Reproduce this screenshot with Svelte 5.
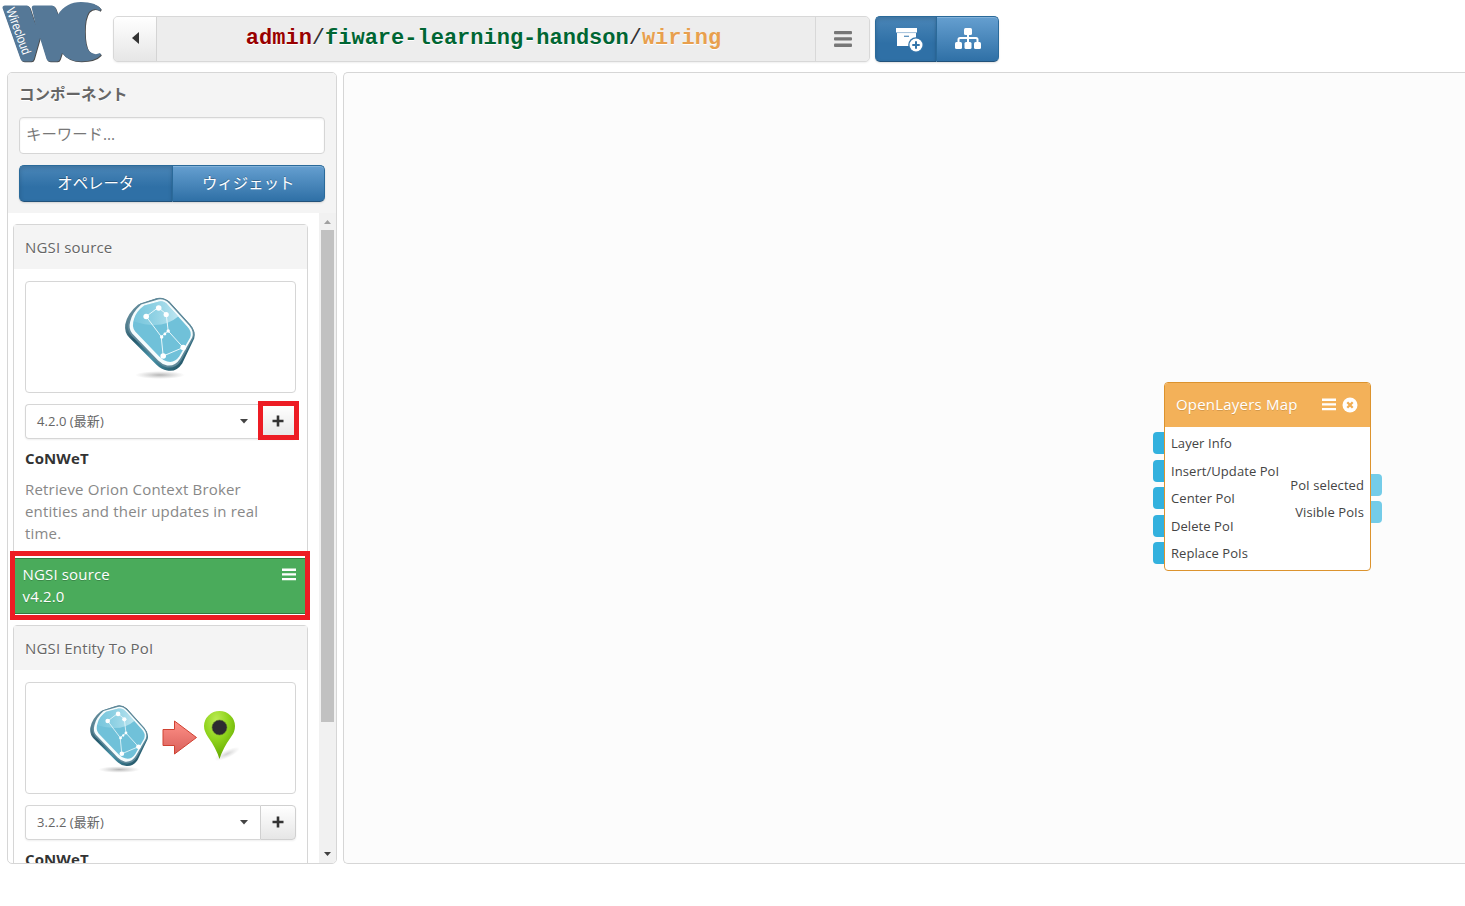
<script>
  const components = [
    {
      title: 'NGSI source', version: '4.2.0', vendor: 'CoNWeT', kind: 'orion',
      description: 'Retrieve Orion Context Broker entities and their updates in real time.',
      instance: { title: 'NGSI source', version: 'v4.2.0' }
    },
    { title: 'NGSI Entity To PoI', version: '3.2.2', vendor: 'CoNWeT', kind: 'convert' }
  ];
  const inputs = ['Layer Info', 'Insert/Update PoI', 'Center PoI', 'Delete PoI', 'Replace PoIs'];
  const outputs = ['PoI selected', 'Visible PoIs'];
  const mark = 'M2.5 8Q2.3 5.5 5 5.5H27Q29 5.5 30 8L35.7 25L32 9Q31 5.5 34 5.5H52Q54.5 5.5 55.5 8L58 14.500Q66 2 81 2Q96 2 101 9L100 11Q94 7 89 12Q85 18 85 31Q85 46 89 51Q94 56 100 53L101 55Q95 61.500 81 61.500Q68 61.500 62 53L60 59Q59 61.500 57 61.500H50Q47.500 61.500 46.500 59L40 38L34 59Q33 61.500 31 61.500H24Q21.500 61.500 20.500 59Z';
</script>

{#snippet bars()}
  <svg class="bars" width="14" height="13" viewBox="0 0 14 13" fill="currentColor">
    <path d="M0 .5h14v2.4H0zM0 5.2h14v2.4H0zM0 9.9h14v2.4H0z" />
  </svg>
{/snippet}

{#snippet tile()}
  <ellipse cx="49" cy="88" rx="25" ry="4" fill="url(#shade)" />
  <g transform="translate(-.8 -1.500)">
    <path d="M28 19L46 13Q53 11 59 16L80 39Q86 46 84 53L72 78Q66 87 57 85Q51 84 46 79L19 52Q14 47 15 39Q17 28 28 19Z" fill="url(#rim)" />
    <path d="M30 18L47 12.5Q53 11 59 16L80 39Q86 46 83 53L71 75Q66 83 57 82Q52 81 48 77L21 50Q16 44 18 37Q20 28 30 18Z" fill="#60899a" />
    <path d="M31 19L48 14Q54 13 59 18L79 40Q84 46 82 52L70 73Q65 81 57 80Q52 79 48 75L22 48Q18 43 20 36Q22 27 31 19Z" fill="#f5fcfd" />
    <path d="M34 20L49 16Q54 15 58 20L77 41Q82 46 80 52L69 71Q64 78 57 76Q53 75 49 71L25 46Q21 41 24 33Q26 26 34 20Z" fill="#70c1d9" />
    <path d="M34 20L49 16Q54 15 58 20L68 31Q52 45 24 36Q25 26 34 20Z" fill="url(#gloss)" />
    <path d="M36 31L48 22L56 28.500L58 45.500L73 62L53 70.500L51 51L36 31M51 51L58 45.500" fill="none" stroke="#e9f8fb" stroke-width="1" />
    <g fill="#fff"><circle cx="36" cy="31" r="2.800" /><circle cx="48.5" cy="22.500" r="2.800" /><circle cx="56" cy="29" r="2.600" /><circle cx="58" cy="45.500" r="1.700" /><circle cx="51.5" cy="51.500" r="1.700" /><circle cx="54.7" cy="48.500" r="1.400" /><circle cx="73" cy="62" r="2.800" /><circle cx="53" cy="70.500" r="2.800" /></g>
  </g>
{/snippet}

<svg class="defs" width="0" height="0">
  <defs>
    <linearGradient id="rim" x1="0" x2="1" y1="0" y2="1"><stop offset="0" stop-color="#8cacb8" /><stop offset=".35" stop-color="#25596c" /><stop offset=".6" stop-color="#4793a9" /><stop offset="1" stop-color="#173d4c" /></linearGradient>
    <linearGradient id="gloss" x1="0" x2="1"><stop offset="0" stop-color="#9bdaea" stop-opacity=".2" /><stop offset="1" stop-color="#d8f3f9" stop-opacity=".75" /></linearGradient>
    <radialGradient id="shade"><stop offset="0" stop-color="#777" stop-opacity=".55" /><stop offset="1" stop-color="#999" stop-opacity="0" /></radialGradient>
    <linearGradient id="arrow" x1="0" x2="0" y1="0" y2="1"><stop offset="0" stop-color="#ff9087" /><stop offset="1" stop-color="#d8605b" /></linearGradient>
    <radialGradient id="pin" cx=".4" cy=".2" r=".8"><stop offset="0" stop-color="#bdec55" /><stop offset=".5" stop-color="#8fd31c" /><stop offset="1" stop-color="#62a800" /></radialGradient>
  </defs>
</svg>

<header>
  <svg class="logo" width="106" height="66" viewBox="0 0 106 66">
    <path class="under" transform="translate(.8 .8)" d={mark} />
    <path d={mark} />
    <text transform="translate(6 9.500) rotate(70)" textLength="49" lengthAdjust="spacingAndGlyphs">Wirecloud</text>
  </svg>
  <div class="crumbs">
    <button class="back" aria-label="Back"><svg width="7" height="12" viewBox="0 0 7 12"><path d="M7 0v12L0 6z" fill="#333" /></svg></button>
    <div class="path"><b class="owner">admin</b>/<b class="space">fiware-learning-handson</b>/<b class="view">wiring</b></div>
    <button class="menu" aria-label="Menu"><svg width="18" height="16" viewBox="0 0 18 16" fill="#777"><rect width="18" height="3.300" rx="1" /><rect y="6.300" width="18" height="3.300" rx="1" /><rect y="12.600" width="18" height="3.300" rx="1" /></svg></button>
  </div>
  <div class="tools">
    <button class="blue on" aria-label="Components">
      <svg class="archive" width="28" height="26" viewBox="0 0 28 26"><path d="M0 1h21v4.500H0zM1 6h19v13H1z" fill="#fff" /><path d="M1 5.700h19" stroke="#b9d0e4" stroke-width=".6" /><path d="M8 9.300h5" stroke="#5b91bd" stroke-width="1.300" /><circle cx="20" cy="18" r="7.800" fill="#3475aa" /><circle cx="20" cy="18" r="6.500" fill="#fff" /><path d="M20 14.300v7.400M16.300 18h7.400" stroke="#3475aa" stroke-width="2" /></svg>
    </button>
    <button class="blue" aria-label="Behaviours">
      <svg width="26" height="22" viewBox="0 0 26 22" fill="#fff"><rect x="9" width="8" height="7" rx="1.500" /><rect y="14" width="7" height="7" rx="1.500" /><rect x="9.500" y="14" width="7" height="7" rx="1.500" /><rect x="19" y="14" width="7" height="7" rx="1.500" /><path d="M13 6v9M3.500 15v-3.500q0-1.500 1.500-1.500h16q1.500 0 1.500 1.500V15" fill="none" stroke="#fff" stroke-width="2" /></svg>
    </button>
  </div>
</header>

<main>
  <aside>
    <section class="filter">
      <h2>コンポーネント</h2>
      <input placeholder="キーワード..." />
      <div class="tabs"><button class="blue on">オペレータ</button><button class="blue">ウィジェット</button></div>
    </section>
    <section class="results">
      <div class="list">
        {#each components as c}
          <article>
            <h3>{c.title}</h3>
            <div class="body">
              <div class="thumb">
                {#if c.kind === 'orion'}
                  <svg width="100" height="100" viewBox="0 0 100 100">{@render tile()}</svg>
                {:else}
                  <svg class="wide" width="170" height="80" viewBox="0 0 170 80">
                    <g transform="translate(-1.500 1.500) scale(.83)">{@render tile()}</g>
                    <path d="M83 34.500h11.500v-8.500L116.500 42.500L94.500 59v-8.500H83z" fill="url(#arrow)" stroke="#cf4232" />
                    <ellipse cx="147" cy="59" rx="14" ry="4" transform="rotate(-25 147 59)" fill="url(#shade)" opacity=".6" />
                    <path d="M139.500 64Q136 53 128 42Q124 36 124 31A15.500 15 0 0 1 155 31Q155 37 151 42Q143 53 139.500 64Z" fill="url(#pin)" />
                    <circle cx="139.500" cy="32.500" r="7.500" fill="#2d2b31" stroke="#66852c" stroke-width=".6" />
                  </svg>
                {/if}
              </div>
              <div class="version">
                <div class="select"><span>{c.version} (最新)</span><svg width="8" height="5" viewBox="0 0 8 5"><path d="M0 0h8L4 4.500z" fill="#444" /></svg></div>
                <button class="add" class:marked={c.instance} aria-label="Add"><svg width="12" height="12" viewBox="0 0 12 12"><path d="M6 .5v11M.5 6h11" stroke="#333" stroke-width="2.600" /></svg></button>
              </div>
              <strong>{c.vendor}</strong>
              {#if c.description}<p>{c.description}</p>{/if}
            </div>
            {#if c.instance}
              <div class="instance"><div>{c.instance.title}<br />{c.instance.version}</div>{@render bars()}</div>
            {/if}
          </article>
        {/each}
      </div>
      <div class="scroll">
        <svg width="7" height="4" viewBox="0 0 7 4"><path d="M0 4L3.500 0L7 4z" fill="#a0a0a0" /></svg>
        <div class="thumbbar"></div>
        <svg width="7" height="4" viewBox="0 0 7 4"><path d="M0 0L3.500 4L7 0z" fill="#404040" /></svg>
      </div>
    </section>
  </aside>

  <div class="canvas">
    <div class="node">
      <div class="title"><span>OpenLayers Map</span>{@render bars()}<svg width="16" height="16" viewBox="0 0 16 16"><circle cx="8" cy="8" r="7.500" fill="#fff" /><path d="M5.300 5.300l5.400 5.400M10.700 5.300l-5.400 5.400" stroke="#f1ae54" stroke-width="2.300" /></svg></div>
      <div class="ports">
        <ul>{#each inputs as name}<li>{name}</li>{/each}</ul>
        <ul class="out">{#each outputs as name}<li>{name}</li>{/each}</ul>
      </div>
    </div>
  </div>
</main>

<style>
  :global(body) { background: #fff; overflow: hidden; }
  :global(#app) { font: 15px/22px "Open Sans", "Noto Sans CJK JP", sans-serif; color: #666; }
  * { box-sizing: border-box; }
  button { font: inherit; padding: 0; margin: 0; display: flex; align-items: center; justify-content: center; }
  .defs { position: absolute; }
  header { display: flex; height: 72px; width: 1465px; }
  .logo { flex: none; fill: #557897; }
  .logo .under { fill: #4a4a4a; }
  .logo text { fill: #fff; font: 13px "Liberation Sans", sans-serif; }
  .crumbs { display: flex; width: 757px; height: 46px; margin: 16px 5px 0 7px; border: 1px solid #d8d8d8; border-radius: 5px; background: #ededed; box-shadow: 0 1px 2px #0001; overflow: hidden; }
  .back { width: 43px; padding-bottom: 2px; border: 0; border-right: 1px solid #d4d4d4; background: linear-gradient(#fff, #e6e6e6); }
  .path { flex: 1; padding: 1px 5px 0 0; text-align: center; font: 22px/42px "Courier New", "Liberation Mono", monospace; color: #333; text-shadow: 0 1px #fff; white-space: pre; }
  .owner { color: #900; }
  .space { color: #063; }
  .view { color: #e8a04e; }
  .menu { width: 54px; padding-bottom: 1px; border: 0; border-left: 1px solid #d8d8d8; background: #eee; }
  .tools { display: flex; width: 124px; height: 46px; margin-top: 16px; }
  .blue { flex: 1; padding-bottom: 1px; color: #fff; border: 1px solid #2a6a9a; border-bottom-color: #22527a; background: linear-gradient(#659fd0, #2f70a6); box-shadow: inset 0 1px #ffffff33, 0 1px 2px #0002; text-shadow: 0 -1px #0004; }
  .blue:first-child { border-radius: 5px 0 0 5px; border-right: 0; }
  .blue:last-child { border-radius: 0 5px 5px 0; }
  .blue.on { background: linear-gradient(#4a86b8, #2f70a6 60%); box-shadow: inset 0 2px 4px #00000026, 0 1px 2px #0002; }
  .tools .blue { flex: none; width: 63px; padding-bottom: 0; }
  .tools .blue.on { width: 61px; padding: 2px 0 0 8px; }
  main { display: flex; gap: 6px; padding-left: 7px; width: 1465px; height: 792px; }
  aside { flex: none; width: 330px; border: 1px solid #d6d6d6; border-radius: 5px; overflow: hidden; display: flex; flex-direction: column; }
  .filter { flex: none; height: 140px; background: #f4f4f4; padding: 10px 11px 0; }
  h2 { margin: 0 0 12px; font-size: 15.500px; line-height: 22px; color: #666; text-shadow: 0 1px #fff; }
  input { display: block; width: 306px; height: 37px; padding: 0 7px 2px 6px; border: 1px solid #d6d6d6; border-radius: 4px; background: #fff; font: inherit; font-size: 15.400px; box-shadow: inset 0 1px 2px #0001; }
  input::placeholder { color: #777; opacity: 1; }
  .tabs { display: flex; width: 306px; height: 37px; margin-top: 11px; font-size: 15.400px; }
  .tabs .blue { padding-bottom: 0; }
  .results { flex: 1; min-height: 0; display: flex; }
  .list { flex: 1; overflow: hidden; padding: 11px 11px 0 5px; }
  article { border: 1px solid #d6d6d6; border-radius: 4px; margin-bottom: 11px; width: 295px; }
  h3 { margin: 0; height: 44px; padding: 0 11px; font-weight: 400; font-size: 15px; letter-spacing: .16px; line-height: 45px; background: #f4f4f4; text-shadow: 0 1px #fff; }
  .body { padding: 12px 11px 0; }
  .thumb { height: 112px; width: 271px; border: 1px solid #d6d6d6; border-radius: 4px; display: flex; align-items: center; justify-content: center; }
  .wide { margin: -7px 0 0 8px; }
  .version { display: flex; width: 271px; height: 35px; margin: 11px 0 8px; border-radius: 4px; box-shadow: 0 1px 2px #0001; }
  .select { flex: 1; border: 1px solid #d6d6d6; border-right: 0; border-radius: 4px 0 0 4px; padding: 0 12px 0 11px; display: flex; align-items: center; justify-content: space-between; font-size: 13px; letter-spacing: .06px; }
  .select span { padding-bottom: 1px; }
  .add { width: 36px; padding-bottom: 1px; border: 1px solid #d0d0d0; border-radius: 0 4px 4px 0; background: linear-gradient(#fff, #e6e6e6); }
  .add.marked { position: relative; border-color: transparent; }
  .marked::after { content: ''; position: absolute; inset: -4px -4px -2px -3px; border: 5px solid #ed1c24; }
  strong { display: block; color: #333; line-height: 22px; letter-spacing: .1px; }
  p { margin: 9px 20px 0 0; height: 66px; color: #888; letter-spacing: .18px; }
  .instance { position: relative; margin: 14px 1px -1px 0; height: 56px; width: 292px; background: #4aab5b; border-top: 1px solid #2e7e40; border-bottom: 1px solid #38773f; color: #fff; padding: 5px 10px 0 8.500px; display: flex; justify-content: space-between; letter-spacing: .16px; text-shadow: 0 1px #0003; }
  .instance > div { margin-top: -1px; }
  .instance::after { content: ''; position: absolute; inset: -8px -4px -7px -4px; border: 5px solid #ed1c24; }
  .instance .bars { margin-top: 4px; }
  .scroll { width: 17px; background: #f1f1f1; display: flex; flex-direction: column; align-items: center; padding: 7px 0 7px; }
  .thumbbar { width: 13px; height: 492px; margin: 6px 0 auto; background: #c1c1c1; }
  .canvas { flex: 1; position: relative; border: 1px solid #d6d6d6; border-right: 0; border-radius: 5px 0 0 5px; background: #fcfcfc; }
  .node { position: absolute; left: 820px; top: 309px; width: 207px; height: 189px; border: 1px solid #dc932e; border-radius: 4px; background: #fff; }
  .title { display: flex; align-items: center; height: 44px; padding: 0 12px 0 11px; background: #f3b159; color: #fff; border-radius: 3px 3px 0 0; text-shadow: 0 1px #0002; letter-spacing: .2px; }
  .title span { flex: 1; padding-bottom: 2px; }
  .title .bars { margin-right: 6px; }
  .title svg { position: relative; top: -.5px; }
  .ports { display: flex; justify-content: space-between; align-items: center; height: 143px; font-size: 13px; letter-spacing: .07px; color: #444; }
  ul { list-style: none; margin: -1px 0 0; padding: 0 0 0 6px; display: grid; gap: 5.500px; }
  ul.out { margin: 0; padding: 0 6px 0 0; text-align: right; }
  li { position: relative; height: 22px; white-space: nowrap; }
  li::before { content: ''; position: absolute; left: -18px; top: 0; width: 11px; height: 22px; background: #33b1de; border-radius: 4px 0 0 4px; }
  .out li::before { left: auto; right: -18px; background: #74cce8; border-radius: 0 4px 4px 0; }
</style>
